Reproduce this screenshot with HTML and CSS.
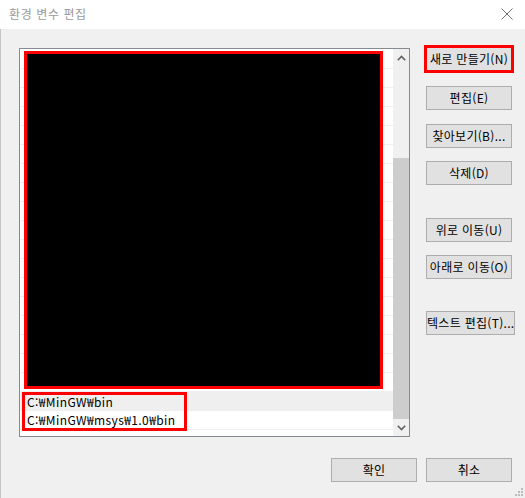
FILE: index.html
```html
<!DOCTYPE html>
<html lang="ko">
<head>
<meta charset="utf-8">
<title>환경 변수 편집</title>
<link rel="stylesheet" href="styles.css">
</head>
<body>
<div class="window">
  <div class="titlebar">
    <span class="title">환경 변수 편집</span>
    <svg class="close" width="12" height="12" viewBox="0 0 12 12"><path d="M0.5 0.5 L11.5 11.5 M11.5 0.5 L0.5 11.5" stroke="#6f6f6f" stroke-width="1" fill="none"/></svg>
  </div>
  <div class="body">
    <div class="main">
      <div class="listbox">
        <div class="rows">
          <div class="row"></div><div class="row"></div><div class="row"></div><div class="row"></div>
          <div class="row"></div><div class="row"></div><div class="row"></div><div class="row"></div>
          <div class="row"></div><div class="row"></div><div class="row"></div><div class="row"></div>
          <div class="row"></div><div class="row"></div><div class="row"></div><div class="row"></div>
          <div class="row"></div><div class="row"></div>
          <div class="row hover">C:₩MinGW₩bin</div>
          <div class="row">C:₩MinGW₩msys₩1.0₩bin</div>
          <div class="redact"></div>
          <div class="mark"></div>
        </div>
        <div class="scrollbar">
          <div class="sb-btn"><svg width="9" height="6" viewBox="0 0 9 6"><path d="M0.8 5.2 L4.5 1.5 L8.2 5.2" stroke="#606060" stroke-width="1.6" fill="none"/></svg></div>
          <div class="sb-track"><div class="sb-thumb"></div></div>
          <div class="sb-btn"><svg width="9" height="6" viewBox="0 0 9 6"><path d="M0.8 0.8 L4.5 4.5 L8.2 0.8" stroke="#606060" stroke-width="1.6" fill="none"/></svg></div>
        </div>
      </div>
      <div class="side">
        <button class="btn marked">새로 만들기(N)</button>
        <button class="btn m15">편집(E)</button>
        <button class="btn m14">찾아보기(B)...</button>
        <button class="btn m13">삭제(D)</button>
        <button class="btn m33">위로 이동(U)</button>
        <button class="btn m13">아래로 이동(O)</button>
        <button class="btn wide m32">텍스트 편집(T)...</button>
      </div>
    </div>
    <div class="footer">
      <button class="btn">확인</button>
      <button class="btn">취소</button>
    </div>
    <div class="grip">
      <span class="dot d1"></span><span class="dot d2"></span><span class="dot d3"></span>
      <span class="dot d4"></span><span class="dot d5"></span><span class="dot d6"></span>
    </div>
  </div>
</div>
</body>
</html>
```

FILE: styles.css
```css
* { box-sizing: border-box; }
html, body {
  margin: 0;
  padding: 0;
  width: 525px;
  height: 498px;
  overflow: hidden;
  background: #f0f0f0;
  font-family: "Noto Sans CJK KR", "Noto Sans", sans-serif;
  font-size: 12px;
  color: #000;
}
.window {
  width: 525px;
  height: 498px;
  display: flex;
  flex-direction: column;
}
.titlebar {
  height: 29px;
  background: #fff;
  display: flex;
  align-items: center;
  justify-content: space-between;
  padding: 0 12px 0 9px;
  flex: none;
}
.title {
  color: #9a9a9a;
  font-size: 12px;
  line-height: 14px;
  letter-spacing: 0.6px;
  margin-top: -1px;
}
.close { display: block; margin-top: -1px; }
.body {
  position: relative;
  flex: 1;
  border-left: 1px solid #c6c6c6;
  padding: 19px 0 0 18px;
}
.main {
  display: flex;
  align-items: flex-start;
}
.listbox {
  width: 391px;
  height: 389px;
  border: 1px solid #868a91;
  background: #fff;
  display: flex;
}
.rows {
  position: relative;
  width: 373px;
  padding-top: 1px;
}
.row {
  height: 19px;
  border-bottom: 1px solid #efefef;
  padding-left: 7px;
  line-height: 18px;
  letter-spacing: 0.4px;
  white-space: nowrap;
}
.row.hover {
  background: #efefef;
  border-top: 1px solid #efefef;
  margin-top: -1px;
  height: 20px;
  line-height: 19px;
}
.redact {
  position: absolute;
  left: 4px;
  top: 2px;
  width: 359px;
  height: 338px;
  background: #000;
  border: 3px solid #ff0000;
}
.mark {
  position: absolute;
  left: 2px;
  top: 343px;
  width: 165px;
  height: 39px;
  border: 3px solid #ff0000;
}
.scrollbar {
  width: 16px;
  display: flex;
  flex-direction: column;
  background: #f0f0f0;
}
.sb-btn {
  height: 17px;
  display: flex;
  align-items: center;
  justify-content: center;
  flex: none;
}
.sb-btn svg { display: block; }
.sb-track {
  flex: 1;
  padding-top: 92px;
  display: flex;
  flex-direction: column;
}
.sb-thumb {
  flex: 1;
  background: #cdcdcd;
}
.side {
  margin-left: 16px;
  margin-top: -1px;
  display: flex;
  flex-direction: column;
  align-items: flex-start;
}
.btn {
  width: 86px;
  height: 24px;
  border: 1px solid #adadad;
  background: #e1e1e1;
  font-family: "Noto Sans CJK KR", "Noto Sans", sans-serif;
  font-size: 12px;
  letter-spacing: 0.3px;
  color: #000;
  padding: 0;
  margin: 0;
  line-height: 20px;
  text-align: center;
  white-space: nowrap;
}
.btn.wide { width: 89px; }
.btn.marked {
  outline: 3px solid #ff0000;
  outline-offset: -1px;
}
.m15 { margin-top: 15px; }
.m14 { margin-top: 14px; }
.m13 { margin-top: 13px; }
.m33 { margin-top: 33px; }
.m32 { margin-top: 32px; }
.footer {
  display: flex;
  justify-content: flex-end;
  gap: 9px;
  margin-top: 21px;
  padding-right: 13px;
}
.grip {
  position: absolute;
  right: 2px;
  bottom: 2px;
  width: 8px;
  height: 8px;
}
.dot {
  position: absolute;
  width: 2px;
  height: 2px;
  background: #bcbcbc;
}
.d1 { left: 6px; top: 0; }
.d2 { left: 3px; top: 3px; }
.d3 { left: 6px; top: 3px; }
.d4 { left: 0; top: 6px; }
.d5 { left: 3px; top: 6px; }
.d6 { left: 6px; top: 6px; }
```
